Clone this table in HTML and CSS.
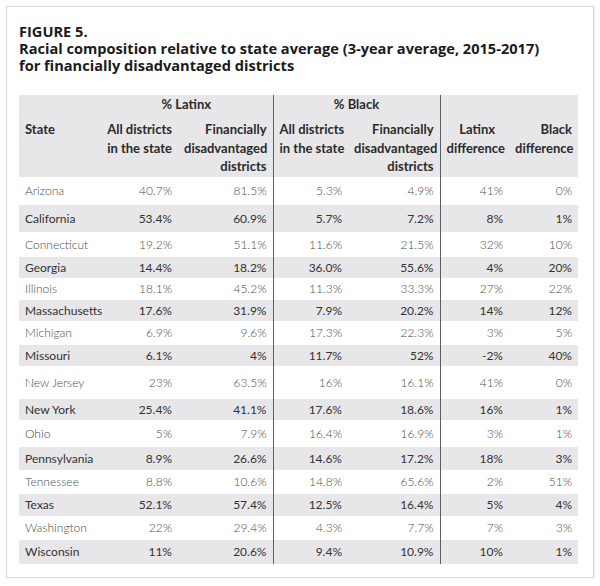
FILE: index.html
```html
<!DOCTYPE html>
<html lang="en">
<head>
<meta charset="utf-8">
<title>Figure 5</title>
<link rel="stylesheet" href="styles.css">
</head>
<body>
<div class="figure">
  <h1 class="title"><span class="fig-label">FIGURE 5.</span><span class="fig-text">Racial composition relative to state average (3-year average, 2015-2017)</span><span class="fig-text">for financially disadvantaged districts</span></h1>
  <table class="data">
    <colgroup>
      <col class="c-state"><col class="c-all"><col class="c-fin"><col class="c-all2"><col class="c-fin2"><col class="c-diff"><col class="c-diff2">
    </colgroup>
    <thead>
      <tr class="group-row">
        <th></th>
        <th colspan="2" class="group">% Latinx</th>
        <th colspan="2" class="group sep">% Black</th>
        <th colspan="2" class="sep"></th>
      </tr>
      <tr class="label-row">
        <th class="left">State</th>
        <th>All districts<br>in the state</th>
        <th>Financially<br>disadvantaged<br>districts</th>
        <th class="sep">All districts<br>in the state</th>
        <th>Financially<br>disadvantaged<br>districts</th>
        <th class="sep"><span class="latinx">Latinx</span><br>difference</th>
        <th>Black<br>difference</th>
      </tr>
    </thead>
    <tbody>
      <tr><td class="left">Arizona</td><td>40.7%</td><td>81.5%</td><td class="sep">5.3%</td><td>4.9%</td><td class="sep">41%</td><td>0%</td></tr>
      <tr class="shade"><td class="left">California</td><td>53.4%</td><td>60.9%</td><td class="sep">5.7%</td><td>7.2%</td><td class="sep">8%</td><td>1%</td></tr>
      <tr><td class="left">Connecticut</td><td>19.2%</td><td>51.1%</td><td class="sep">11.6%</td><td>21.5%</td><td class="sep">32%</td><td>10%</td></tr>
      <tr class="shade"><td class="left">Georgia</td><td>14.4%</td><td>18.2%</td><td class="sep">36.0%</td><td>55.6%</td><td class="sep">4%</td><td>20%</td></tr>
      <tr><td class="left">Illinois</td><td>18.1%</td><td>45.2%</td><td class="sep">11.3%</td><td>33.3%</td><td class="sep">27%</td><td>22%</td></tr>
      <tr class="shade"><td class="left">Massachusetts</td><td>17.6%</td><td>31.9%</td><td class="sep">7.9%</td><td>20.2%</td><td class="sep">14%</td><td>12%</td></tr>
      <tr><td class="left">Michigan</td><td>6.9%</td><td>9.6%</td><td class="sep">17.3%</td><td>22.3%</td><td class="sep">3%</td><td>5%</td></tr>
      <tr class="shade"><td class="left">Missouri</td><td>6.1%</td><td>4%</td><td class="sep">11.7%</td><td>52%</td><td class="sep">-2%</td><td>40%</td></tr>
      <tr><td class="left">New Jersey</td><td>23%</td><td>63.5%</td><td class="sep">16%</td><td>16.1%</td><td class="sep">41%</td><td>0%</td></tr>
      <tr class="shade"><td class="left">New York</td><td>25.4%</td><td>41.1%</td><td class="sep">17.6%</td><td>18.6%</td><td class="sep">16%</td><td>1%</td></tr>
      <tr><td class="left">Ohio</td><td>5%</td><td>7.9%</td><td class="sep">16.4%</td><td>16.9%</td><td class="sep">3%</td><td>1%</td></tr>
      <tr class="shade"><td class="left">Pennsylvania</td><td>8.9%</td><td>26.6%</td><td class="sep">14.6%</td><td>17.2%</td><td class="sep">18%</td><td>3%</td></tr>
      <tr><td class="left">Tennessee</td><td>8.8%</td><td>10.6%</td><td class="sep">14.8%</td><td>65.6%</td><td class="sep">2%</td><td>51%</td></tr>
      <tr class="shade"><td class="left">Texas</td><td>52.1%</td><td>57.4%</td><td class="sep">12.5%</td><td>16.4%</td><td class="sep">5%</td><td>4%</td></tr>
      <tr><td class="left">Washington</td><td>22%</td><td>29.4%</td><td class="sep">4.3%</td><td>7.7%</td><td class="sep">7%</td><td>3%</td></tr>
      <tr class="shade"><td class="left">Wisconsin</td><td>11%</td><td>20.6%</td><td class="sep">9.4%</td><td>10.9%</td><td class="sep">10%</td><td>1%</td></tr>
    </tbody>
  </table>
</div>
</body>
</html>
```
FILE: styles.css
```css
html, body {
  margin: 0;
  padding: 0;
  background: #ffffff;
}

body {
  font-family: Lato, "Open Sans", "Liberation Sans", sans-serif;
  color: #333;
}

.figure {
  box-sizing: border-box;
  margin: 6px 0 0 6px;
  width: 588px;
  height: 572px;
  border: 1px solid #d9d9d9;
  padding: 16px 14px 0 12px;
  box-shadow: 1px 1px 1px rgba(0, 0, 0, 0.06);
}

.title {
  margin: 0;
  font-family: "Open Sans", Lato, sans-serif;
  font-size: 14.6px;
  font-weight: 700;
  color: #1b1b1b;
  line-height: 17px;
}

.fig-label {
  display: block;
  line-height: 16px;
  margin-bottom: 1px;
}

.fig-text {
  display: block;
}

.data {
  margin-top: 21px;
  width: 559px;
  border-collapse: collapse;
  table-layout: fixed;
}

.c-state { width: 81px; }
.c-all { width: 78px; }
.c-fin { width: 95px; }
.c-all2 { width: 75px; }
.c-fin2 { width: 92px; }
.c-diff { width: 69px; }
.c-diff2 { width: 69px; }

.data thead tr {
  background: #e7e6e9;
}

.data th {
  font-size: 13px;
  font-weight: 700;
  color: #2b2b2b;
  line-height: 18.5px;
  text-align: right;
  padding: 0 6px;
  vertical-align: top;
  white-space: nowrap;
}

.group-row th {
  height: 24px;
  padding-top: 0;
  padding-bottom: 0;
}

.data th.group {
  text-align: center;
}

.label-row th {
  padding-top: 1px;
  padding-bottom: 1px;
}

.data .left {
  text-align: left;
}

.latinx {
  margin-right: 8px;
}

.sep {
  border-left: 1px solid #5e5e5e;
}

.data td {
  font-size: 12px;
  font-weight: 300;
  color: #4a4a4a;
  text-align: right;
  padding: 0 6px;
  vertical-align: middle;
  white-space: nowrap;
}

.data tr.shade {
  background: #e7e6e9;
}

.data tr.shade td {
  font-weight: 400;
  color: #333333;
}

.data tbody tr:nth-child(1) { height: 28px; }
.data tbody tr:nth-child(2) { height: 27px; }
.data tbody tr:nth-child(3) { height: 25px; }
.data tbody tr:nth-child(4) { height: 21px; }
.data tbody tr:nth-child(5) { height: 22px; }
.data tbody tr:nth-child(6) { height: 21px; }
.data tbody tr:nth-child(7) { height: 24px; }
.data tbody tr:nth-child(8) { height: 21px; }
.data tbody tr:nth-child(9) { height: 33px; }
.data tbody tr:nth-child(10) { height: 21px; }
.data tbody tr:nth-child(11) { height: 27px; }
.data tbody tr:nth-child(12) { height: 23px; }
.data tbody tr:nth-child(13) { height: 24px; }
.data tbody tr:nth-child(14) { height: 22px; }
.data tbody tr:nth-child(15) { height: 24px; }
.data tbody tr:nth-child(16) { height: 24px; }
```
